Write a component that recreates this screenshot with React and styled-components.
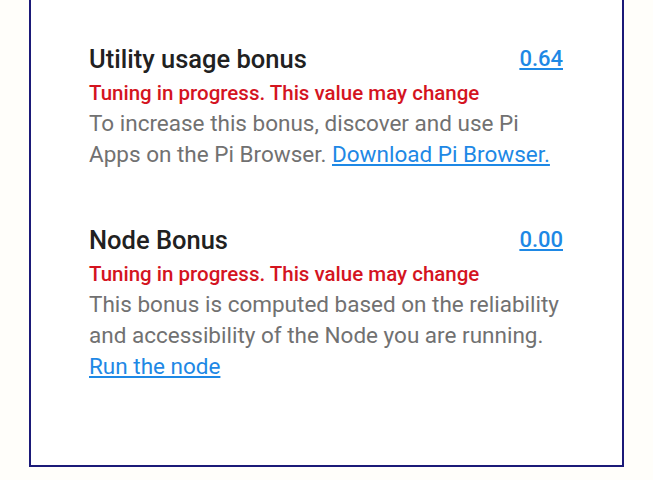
import React from "react";
import styled, { createGlobalStyle } from "styled-components";

const Global = createGlobalStyle`
  body {
    margin: 0;
    background: #fffefa;
    font-family: Roboto, "Noto Sans", sans-serif;
  }
`;

const Card = styled.section`
  box-sizing: border-box;
  width: 595px;
  height: 467px;
  margin-left: 29px;
  padding: 45px 59px 0 58px;
  background: #ffffff;
  border: 2px solid #1b1a78;
  border-top: none;
  display: flex;
  flex-direction: column;
  gap: 56px;
`;

const Block = styled.div`
  display: flex;
  flex-direction: column;
`;

const TitleRow = styled.div`
  display: flex;
  justify-content: space-between;
  align-items: flex-start;
`;

const Title = styled.h3`
  margin: 0;
  font-size: 25.5px;
  line-height: 28px;
  font-weight: 500;
  color: #212121;
`;

const Value = styled.a`
  font-size: 22px;
  line-height: 28px;
  font-weight: 500;
  color: #1e88e5;
  text-decoration: underline;
`;

const Warning = styled.div`
  margin-top: 6px;
  font-size: 20.5px;
  line-height: 29px;
  font-weight: 500;
  color: #d4141f;
`;

const Text = styled.p`
  margin: 0;
  font-size: 22.5px;
  line-height: 31px;
  color: #717171;
`;

const TextLink = styled.a`
  color: #1e88e5;
  text-decoration: underline;
`;

const bonuses = [
  {
    title: "Utility usage bonus",
    value: "0.64",
    body: (
      <>
        To increase this bonus, discover and use Pi Apps on the Pi Browser.{" "}
        <TextLink>Download Pi Browser.</TextLink>
      </>
    ),
  },
  {
    title: "Node Bonus",
    value: "0.00",
    body: (
      <>
        This bonus is computed based on the reliability and accessibility of the
        Node you are running.
        <br />
        <TextLink>Run the node</TextLink>
      </>
    ),
  },
];

export default function App() {
  return (
    <>
      <Global />
      <Card>
        {bonuses.map((b) => (
          <Block key={b.title}>
            <TitleRow>
              <Title>{b.title}</Title>
              <Value>{b.value}</Value>
            </TitleRow>
            <Warning>Tuning in progress. This value may change</Warning>
            <Text>{b.body}</Text>
          </Block>
        ))}
      </Card>
    </>
  );
}
